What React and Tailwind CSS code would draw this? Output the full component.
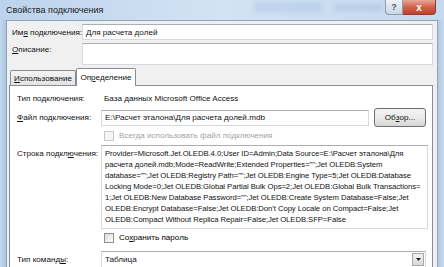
import React from "react";

const LINES = [
  "Provider=Microsoft.Jet.OLEDB.4.0;User ID=Admin;Data Source=E:\\Расчет эталона\\Для",
  "расчета долей.mdb;Mode=ReadWrite;Extended Properties=\"\";Jet OLEDB:System",
  "database=\"\";Jet OLEDB:Registry Path=\"\";Jet OLEDB:Engine Type=5;Jet OLEDB:Database",
  "Locking Mode=0;Jet OLEDB:Global Partial Bulk Ops=2;Jet OLEDB:Global Bulk Transactions=",
  "1;Jet OLEDB:New Database Password=\"\";Jet OLEDB:Create System Database=False;Jet",
  "OLEDB:Encrypt Database=False;Jet OLEDB:Don't Copy Locale on Compact=False;Jet",
  "OLEDB:Compact Without Replica Repair=False;Jet OLEDB:SFP=False",
];

function Box({ className = "", children }) {
  return (
    <div className={`border border-[#d5d9e0] border-t-[#abadb3] bg-white ${className}`}>
      {children}
    </div>
  );
}

function Check({ disabled, label }) {
  return (
    <div className="flex items-center gap-[5px]">
      <div
        className={`h-[10px] w-[10px] border ${
          disabled
            ? "border-[#c9c9c9] bg-[#f4f4f4]"
            : "border-[#8f8f8f] bg-gradient-to-br from-[#dcdcdc] to-[#fbfbfb]"
        }`}
      />
      <span className={disabled ? "text-[#a3a3a3]" : "text-black"}>{label}</span>
    </div>
  );
}

export default function App() {
  return (
    <div className="flex h-[267px] w-[444px] flex-col overflow-hidden whitespace-nowrap bg-[#bfd5ec] font-['Liberation_Sans',sans-serif] text-[8.1px] leading-[11px] text-[#111]">
      {/* title bar */}
      <div className="flex h-[20px] shrink-0 items-start bg-gradient-to-r from-[#bcd3ec] via-[#d3e3f4] to-[#c4d8ee]">
        <div className="pl-[6px] pt-[4px] text-[9px] leading-[12px] text-[#1a1a1a]">Свойства подключения</div>
        <div className="ml-[150px] mt-[2px] h-[11px] w-[70px] rounded-sm bg-[#b4cde8] opacity-60 blur-[2px]" />
        <div className="ml-[10px] mt-[4px] h-[7px] w-[50px] rounded-sm bg-[#a9c1dc] opacity-50 blur-[2px]" />
        <div className="ml-auto mr-[8px] flex">
          <div className="flex h-[15px] w-[18px] items-center justify-center rounded-bl-[4px] border border-t-0 border-[#8c9bb0] bg-gradient-to-b from-[#eef3f9] to-[#c9d6e5] text-[9px] font-bold text-[#4a5a70]">
            ?
          </div>
          <div className="flex h-[15px] w-[33px] items-center justify-center rounded-br-[4px] border border-l-0 border-t-0 border-[#8b3b2f] bg-gradient-to-b from-[#e9a898] via-[#d2604a] to-[#c0412a] text-[10px] font-bold text-white">
            x
          </div>
        </div>
      </div>

      <div className="flex min-h-0 flex-1">
        <div className="w-[6px] shrink-0 bg-gradient-to-r from-[#c3d8ee] to-[#aec6e2]" />
        <div className="flex min-w-0 flex-1 flex-col border-l border-t border-[#8fa3bb] bg-[#f0f0f0]">
          {/* name */}
          <div className="mt-[3px] flex shrink-0 items-center">
            <div className="w-[75px] shrink-0 pl-[5px]">
              Им<span className="underline">я</span> подключения:
            </div>
            <Box className="flex h-[16px] w-[351px] items-center pl-[3px]">Для расчета долей</Box>
          </div>
          {/* description */}
          <div className="mt-[3px] flex shrink-0 items-start">
            <div className="w-[75px] shrink-0 pl-[5px] pt-[1px]">
              <span className="underline">О</span>писание:
            </div>
            <Box className="h-[22px] w-[351px]" />
          </div>

          {/* tabs */}
          <div className="mt-[3px] flex shrink-0 items-end pl-[3px]">
            <div className="flex h-[15px] w-[66px] items-center justify-center rounded-t-[2px] border border-b-0 border-[#898c95] bg-gradient-to-b from-[#f4f4f4] to-[#e3e3e3]">
              <span className="underline">И</span>спользование
            </div>
            <div className="relative -mb-px flex h-[18px] w-[60px] items-center justify-center rounded-t-[2px] border border-b-0 border-[#898c95] bg-white pb-[1px]">
              Оп<span className="underline">р</span>еделение
            </div>
          </div>

          {/* panel */}
          <div className="ml-[2px] flex w-[424px] flex-1 flex-col border border-b-0 border-[#898c95] bg-white">
            <div className="mt-[7px] flex shrink-0 items-center">
              <div className="w-[91px] shrink-0 pl-[7px]">Тип подключения:</div>
              <div className="pl-[3px]">База данных Microsoft Office Access</div>
            </div>

            <div className="mt-[4px] flex shrink-0 items-center">
              <div className="w-[91px] shrink-0 pl-[7px]">
                <span className="underline">Ф</span>айл подключения:
              </div>
              <Box className="flex h-[16px] w-[268px] items-center pl-[3px]">
                E:\Расчет эталона\Для расчета долей.mdb
              </Box>
              <div className="ml-[5px] flex h-[19px] w-[52px] items-center justify-center rounded-[3px] border border-[#707070] bg-gradient-to-b from-[#f3f3f3] via-[#ebebeb] to-[#d6d6d6]">
                Об<span className="underline">з</span>ор...
              </div>
            </div>

            <div className="mt-[3px] flex shrink-0 pl-[94px]">
              <Check disabled label="Всегда использовать файл подключения" />
            </div>

            <div className="mt-[4px] flex shrink-0 items-start">
              <div className="w-[91px] shrink-0 pl-[7px] pt-[3px]">
                Строка подкл<span className="underline">ю</span>чения:
              </div>
              <Box className="h-[84px] w-[327px] overflow-hidden pl-[3px] pt-[2px] text-[7.7px] tracking-[-0.05px]">
                {LINES.map((l, i) => (
                  <div key={i}>{l}</div>
                ))}
              </Box>
            </div>

            <div className="mt-[3px] flex shrink-0 pl-[94px]">
              <Check label={<>Со<span className="underline">х</span>ранить пароль</>} />
            </div>

            <div className="mt-[8px] flex shrink-0 items-center">
              <div className="w-[91px] shrink-0 pl-[7px]">
                Тип команд<span className="underline">ы</span>:
              </div>
              <Box className="flex h-[17px] w-[325px] items-center justify-between pl-[3px] pr-px">
                <span>Таблица</span>
                <div className="flex h-[13px] w-[12px] items-center justify-center border border-[#a7a7a7] bg-gradient-to-b from-[#f2f2f2] to-[#d9d9d9]">
                  <svg width="5" height="3" viewBox="0 0 5 3">
                    <path d="M0 0h5L2.5 3z" fill="#222" />
                  </svg>
                </div>
              </Box>
            </div>
          </div>
        </div>
        <div className="w-[7px] shrink-0 border-l border-[#8fa3bb] bg-gradient-to-r from-[#b2c9e3] to-[#c6daef]" />
      </div>
    </div>
  );
}
